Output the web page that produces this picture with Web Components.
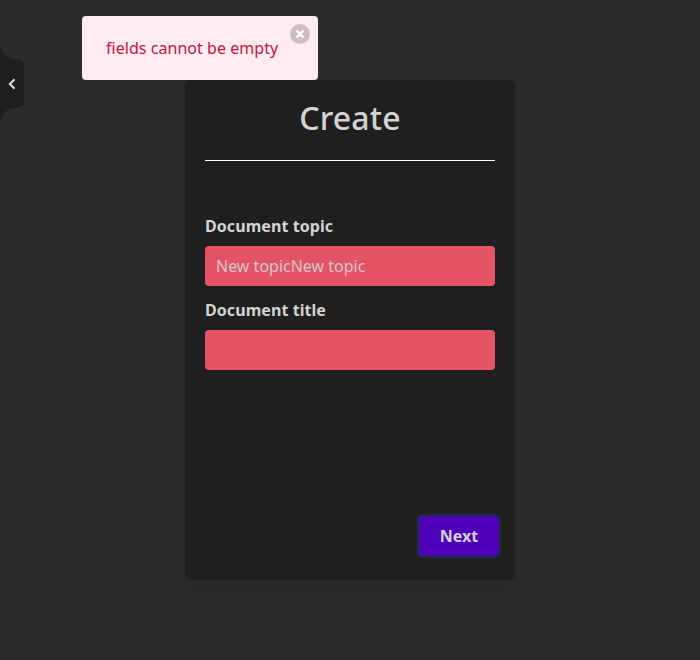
<!DOCTYPE html>
<html lang="en">
<head>
<meta charset="utf-8">
<title>Create</title>
<style>
html, body { margin: 0; height: 100%; }
body { background: #2c2c2c; color: #d3d3d3; font: 16px/24px "Noto Sans", "Open Sans", sans-serif; overflow: hidden; }
</style>
</head>
<body>
<create-page></create-page>
<script>
function define(name, html) {
  const template = document.createElement('template');
  template.innerHTML = html;
  customElements.define(name, class extends HTMLElement {
    constructor() {
      super();
      this.attachShadow({ mode: 'open' }).append(template.content.cloneNode(true));
    }
  });
}

define('drawer-handle', `
<style>
:host { display: block; width: 24px; height: 76px; }
svg { display: block; }
</style>
<svg width="24" height="76" viewBox="0 0 24 76" aria-hidden="true">
  <path d="M0 0C3 8 8 13 16 13Q24 13 24 21V54Q24 62 16 62C8 62 3 66 0 76Z" fill="#1f1f1f"/>
  <path d="M14.5 33.2 9.9 38l4.6 4.8" fill="none" stroke="#d8d8d8" stroke-width="2.1"/>
</svg>`);

define('toast-message', `
<style>
:host { display: flex; box-sizing: border-box; width: 236px; height: 64px; padding: 8px 8px 8px 24px; border-radius: 4px; background: #feecf0; color: #c8143c; justify-content: space-between; }
span { align-self: center; white-space: nowrap; letter-spacing: .04px; }
button { display: block; width: 20px; height: 20px; flex: none; padding: 0; border: 0; border-radius: 50%; background: rgba(10,10,10,.2); }
svg { display: block; }
</style>
<span><slot></slot></span>
<button aria-label="Close"><svg width="20" height="20" viewBox="0 0 20 20"><path d="m6.5 6.5 7 7m0-7-7 7" stroke="#fff" stroke-width="2.2"/></svg></button>`);

define('form-field', `
<style>
:host { display: block; }
label { display: block; font-weight: 700; letter-spacing: .07px; margin-bottom: 8px; }
div { box-sizing: border-box; height: 40px; padding: 8px 11px; border-radius: 4px; background: #e45466; }
</style>
<label><slot name="label"></slot></label>
<div><slot></slot></div>`);

define('action-button', `
<style>
:host { display: block; }
button { display: block; width: 80px; height: 40px; padding: 0; border: 0; border-radius: 4px; background: #4f00b9; box-shadow: 0 0 0 2px #242b40; color: inherit; font: inherit; font-weight: 700; }
</style>
<button><slot></slot></button>`);

define('form-card', `
<style>
:host { display: flex; flex-direction: column; box-sizing: border-box; width: 330px; height: 500px; padding: 20px 20px 24px; border-radius: 6px; background: #1f1f1f; box-shadow: 0 8px 16px -2px rgba(10,10,10,.1), 0 0 0 1px rgba(10,10,10,.02); }
h1 { margin: 0; height: 36px; font-size: 32px; line-height: 36px; font-weight: 550; letter-spacing: .2px; text-align: center; }
hr { width: 100%; height: 1px; margin: 24px 0 53px; border: 0; background: #fff; flex: none; }
.fields { display: flex; flex-direction: column; gap: 12px; }
footer { display: flex; justify-content: flex-end; margin: auto -4px 0 0; }
</style>
<h1><slot name="title"></slot></h1>
<hr>
<div class="fields"><slot></slot></div>
<footer><slot name="action"></slot></footer>`);

define('create-page', `
<style>
:host { display: grid; place-items: center; height: 660px; position: relative; }
drawer-handle { position: absolute; left: 0; top: 46px; }
toast-message { position: absolute; left: 82px; top: 16px; }
.value { color: #d3c5c8; }
</style>
<form-card>
  <span slot="title">Create</span>
  <form-field><span slot="label">Document topic</span><span class="value">New topicNew topic</span></form-field>
  <form-field><span slot="label">Document title</span></form-field>
  <action-button slot="action">Next</action-button>
</form-card>
<drawer-handle></drawer-handle>
<toast-message>fields cannot be empty</toast-message>`);
</script>
</body>
</html>
